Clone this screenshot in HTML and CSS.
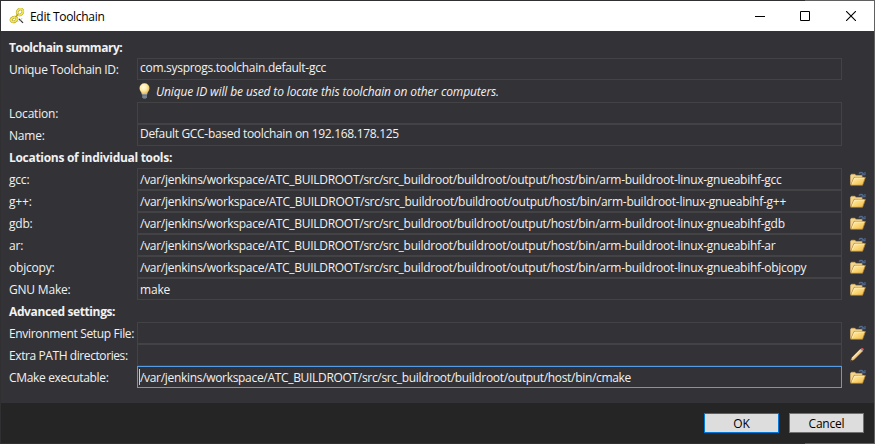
FILE: index.html
```html
<!DOCTYPE html>
<html lang="en">
<head>
<meta charset="utf-8">
<title>Edit Toolchain</title>
<link rel="stylesheet" href="styles.css">
</head>
<body>
<svg class="defs" width="0" height="0">
  <defs>
    <linearGradient id="gold" x1="0" y1="0" x2="1" y2="1"><stop offset="0" stop-color="#fff0b4"/><stop offset=".5" stop-color="#fbd674"/><stop offset="1" stop-color="#eeb445"/></linearGradient>
    <radialGradient id="glow" cx=".4" cy=".35" r=".7"><stop offset="0" stop-color="#fffbe8"/><stop offset=".5" stop-color="#fce9a0"/><stop offset="1" stop-color="#e2ae48"/></radialGradient>
    <symbol id="folder" viewBox="0 0 17 16">
      <path d="M.5 14V4l1-1h3.7l1.2 1.2h6.4v2.4" fill="#f3d58b" stroke="#d2ae6c" stroke-width=".8"/>
      <path d="M.8 14.7 4.3 6.3h12.1l-3 8.4z" fill="url(#gold)" stroke="#a87834" stroke-width=".8"/>
      <path d="M2 13.7 4.9 7h10.4" fill="none" stroke="#fff1bd" stroke-width=".8"/>
      <path d="M9.5 2.3C11 .5 13.4.7 14.4 3" fill="none" stroke="#536b90" stroke-width="1.4"/>
      <path d="M12.2 3.5h3.7V.5" fill="none" stroke="#536b90" stroke-width="1.2"/>
    </symbol>
  </defs>
</svg>
<div class="window">
  <header class="titlebar">
    <svg class="logo" width="16" height="16" viewBox="0 0 16 16">
      <g fill="none"><ellipse cx="11" cy="4" rx="3.2" ry="2.6" transform="rotate(-50 11 4)" stroke="#a39120" stroke-width="2.6"/><ellipse cx="5" cy="11.5" rx="3.1" ry="2.2" transform="rotate(-25 5 11.5)" stroke="#a39120" stroke-width="2.6"/><ellipse cx="11" cy="4" rx="3.2" ry="2.6" transform="rotate(-50 11 4)" stroke="#f2e650" stroke-width="1.8"/><ellipse cx="5" cy="11.5" rx="3.1" ry="2.2" transform="rotate(-25 5 11.5)" stroke="#f2e650" stroke-width="1.8"/><path d="m6.5 9.3 2.5-3" stroke="#b5a62c" stroke-width="1.6"/><path d="m10 10.8 4 4" stroke="#333" stroke-width="1.2"/><path d="m10 13.3 3-3" stroke="#aaa"/></g>
    </svg>
    <h1 class="title">Edit Toolchain</h1>
    <div class="controls">
      <svg width="10" height="10"><path d="M0 5.5h10" stroke="#000"/></svg>
      <svg width="10" height="10"><path d="M.5.5h9v9h-9z" fill="none" stroke="#000"/></svg>
      <svg class="close" width="10" height="10"><path d="m0 0 10 10M10 0 0 10" stroke="#000" stroke-width="1.1"/></svg>
    </div>
  </header>
  <main class="form">
    <h2 class="w-summary">Toolchain summary:</h2>
    <div class="row"><label class="w-id">Unique Toolchain ID:</label><div class="field raised"><span class="v-id">com.sysprogs.toolchain.default-gcc</span></div></div>
    <div class="row"><label></label><div class="hint">
      <svg width="16" height="16" viewBox="0 0 16 16"><path d="M5.3 11.4C5.3 9 3 8 3 5.2a5 5 0 0 1 10 0C13 8 10.7 9 10.7 11.4z" transform="translate(-.5 0)" fill="url(#glow)"/><path d="M5.3 11h4.6v3.3l-1 1.2H6.3l-1-1.2z" fill="#8b98a5"/><path d="M5.3 12.3h4.6M5.3 14h4.6" stroke="#505b66" stroke-width=".7"/></svg>
      <span class="v-hint">Unique ID will be used to locate this toolchain on other computers.</span></div></div>
    <div class="row"><label>Location:</label><div class="field"></div></div>
    <div class="row"><label>Name:</label><div class="field raised"><span class="v-name">Default GCC-based toolchain on 192.168.178.125</span></div></div>

    <h2 class="w-tools">Locations of individual tools:</h2>
    <div class="row"><label>gcc:</label><div class="field"><span class="path">/var/jenkins/workspace/ATC_BUILDROOT/src/src_buildroot/buildroot/output/host/bin/arm-buildroot-linux-gnueabihf-gcc</span></div><svg class="icon"><use href="#folder"/></svg></div>
    <div class="row"><label>g++:</label><div class="field"><span class="path wide">/var/jenkins/workspace/ATC_BUILDROOT/src/src_buildroot/buildroot/output/host/bin/arm-buildroot-linux-gnueabihf-g++</span></div><svg class="icon"><use href="#folder"/></svg></div>
    <div class="row"><label>gdb:</label><div class="field"><span class="path">/var/jenkins/workspace/ATC_BUILDROOT/src/src_buildroot/buildroot/output/host/bin/arm-buildroot-linux-gnueabihf-gdb</span></div><svg class="icon"><use href="#folder"/></svg></div>
    <div class="row"><label>ar:</label><div class="field"><span class="path">/var/jenkins/workspace/ATC_BUILDROOT/src/src_buildroot/buildroot/output/host/bin/arm-buildroot-linux-gnueabihf-ar</span></div><svg class="icon"><use href="#folder"/></svg></div>
    <div class="row"><label>objcopy:</label><div class="field"><span class="path">/var/jenkins/workspace/ATC_BUILDROOT/src/src_buildroot/buildroot/output/host/bin/arm-buildroot-linux-gnueabihf-objcopy</span></div><svg class="icon"><use href="#folder"/></svg></div>
    <div class="row"><label>GNU Make:</label><div class="field"><span>make</span></div><svg class="icon"><use href="#folder"/></svg></div>

    <h2 class="w-advanced">Advanced settings:</h2>
    <div class="row"><label class="w-env">Environment Setup File:</label><div class="field"></div><svg class="icon"><use href="#folder"/></svg></div>
    <div class="row"><label class="w-extra">Extra PATH directories:</label><div class="field"></div>
      <svg class="icon" viewBox="0 0 17 16"><path d="M.5 14.5 2 10.8 10.8 2l2.3 2.2L4.2 13z" fill="#f2cb88" stroke="#b07c3e" stroke-width=".5"/><path d="m2.5 11.3 8.8-8.7" stroke="#ffe8b5" stroke-width="1.2"/><path d="m10.5 2.3 1-1 2.4 2.3-1 1z" fill="#b8c4c6"/><path d="m11.5 1.3.8-.7q1.7-.5 2.2 1.2l-.6 1.8z" fill="#d65b5b"/><path d="m.3 14.8.6-2 1.3 1.3z" fill="#292522"/></svg></div>
    <div class="row"><label class="w-cmake">CMake executable:</label><div class="field focused"><i class="caret"></i><span class="path narrow">/var/jenkins/workspace/ATC_BUILDROOT/src/src_buildroot/buildroot/output/host/bin/cmake</span></div><svg class="icon"><use href="#folder"/></svg></div>
  </main>
  <footer class="footer"><button class="primary">OK</button><button>Cancel</button></footer>
</div>
</body>
</html>
```
FILE: styles.css
```css
* { box-sizing: border-box; }
body {
  margin: 0;
  height: 444px;
  overflow: hidden;
  padding: 1px 1px 1px;
  background: linear-gradient(90deg, #302f31 0 92%, #606060 92%);
  font: 12px "Open Sans", "Noto Sans", sans-serif;
  color: #f1f1f1;
}
.defs { position: absolute; }
.window { display: flex; flex-direction: column; height: 442px; background: #333337; }
.titlebar { display: flex; align-items: center; height: 30px; padding: 0 18px 0 8px; background: #fff; color: #000; }
.title { margin: 0 0 0 5px; font-size: 12px; font-weight: 400; letter-spacing: -.3px; }
.controls { display: flex; gap: 35px; margin-left: auto; }
.close { margin-left: 1px; }
.form { flex: 1; padding: 5px 8px 0; }
h2, .row { height: 22px; line-height: 22px; white-space: nowrap; }
h2 { margin: 0; padding-top: 1px; font-size: 12px; font-weight: 700; letter-spacing: -.38px; }
.w-summary { letter-spacing: -.48px; }
.w-tools { letter-spacing: -.3px; }
.row { display: flex; }
label { flex: 0 0 128px; padding-top: 1px; letter-spacing: -.2px; }
.w-id { letter-spacing: -.34px; }
.w-env { letter-spacing: -.33px; }
.w-extra { letter-spacing: -.41px; }
.w-cmake { letter-spacing: -.34px; }
.field { position: relative; flex: 0 0 705px; padding-left: 2px; border: 1px solid #434346; line-height: 21px; letter-spacing: -.2px; }
.raised { line-height: 18px; }
.v-id { letter-spacing: -.29px; }
.v-name { letter-spacing: -.31px; }
.path { letter-spacing: -.275px; }
.path.wide { letter-spacing: -.255px; }
.path.narrow { letter-spacing: -.315px; }
.focused { border-color: #569de5; }
.caret { position: absolute; left: 1px; top: 2px; width: 1px; height: 16px; background: #ccc; }
.icon { width: 17px; height: 16px; margin: 3px 0 0 8px; }
.hint { display: flex; align-items: center; gap: 3px; padding-top: 1px; font-style: italic; letter-spacing: -.13px; }
.hint svg { margin-top: -1px; }
.footer { display: flex; justify-content: flex-end; gap: 10px; height: 40px; padding: 10px 10px 0; background: #252526; }
button { width: 75px; height: 20px; padding: 0; border: 1px solid #707070; background: #ddd; color: #000; font: inherit; line-height: 19px; letter-spacing: -.2px; }
.primary { border-color: #0078d7; }
```
